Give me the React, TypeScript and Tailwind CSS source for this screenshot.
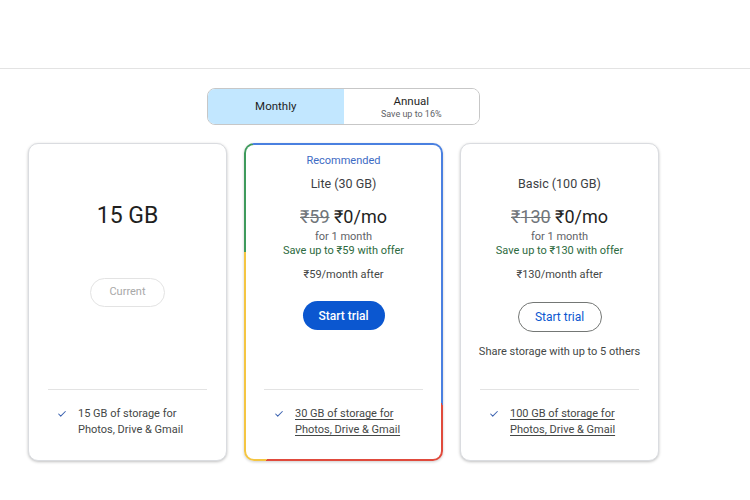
import { Check } from 'lucide-react';

type Plan = {
  title?: string;
  was: string;
  save: string;
  after: string;
  feature: string;
};

function Feature({ text, link }: { text: string; link?: boolean }) {
  return (
    <div className="flex gap-[11px] pl-[28px] pr-4 pt-[16px]">
      <Check className="mt-[3px] h-[10px] w-[10px] shrink-0 text-[#3b62b0]" strokeWidth={2.5} />
      <span className={`w-[114px] text-[11px] leading-4 text-[#444746] ${link ? 'underline underline-offset-2' : ''}`}>
        {text}
      </span>
    </div>
  );
}

function PriceBlock({ plan, recommended }: { plan: Plan; recommended?: boolean }) {
  return (
    <div className="flex flex-col items-center pt-[8px]">
      <div className={`text-[11px] leading-4 ${recommended ? 'text-[#3d6bc4]' : 'text-transparent'}`}>Recommended</div>
      <div className="mt-[6px] text-[12.5px] leading-[18px] text-[#3c4043]">{plan.title}</div>
      <div className="mt-[12px] text-[18px] leading-6 text-[#1f1f1f]">
        <span className="text-[#70757a] line-through decoration-1">₹{plan.was}</span> ₹0/mo
      </div>
      <div className="mt-[1px] text-[11px] leading-[14px] text-[#5f6368]">for 1 month</div>
      <div className="text-[11px] leading-[14px] text-[#2d6a3e]">Save up to ₹{plan.was} with offer</div>
      <div className="mt-[10px] text-[11px] leading-[14px] text-[#444746]">₹{plan.was}/month after</div>
    </div>
  );
}

export default function App() {
  const lite: Plan = { title: 'Lite (30 GB)', was: '59', save: '59', after: '59', feature: '30 GB of storage for Photos, Drive & Gmail' };
  const basic: Plan = { title: 'Basic (100 GB)', was: '130', save: '130', after: '130', feature: '100 GB of storage for Photos, Drive & Gmail' };

  return (
    <div className="min-h-[500px] w-[750px] bg-white font-['Roboto','Noto_Sans',sans-serif] text-[#1f1f1f]">
      <div className="h-[69px] border-b border-[#e3e3e3]" />

      <div className="ml-[28px] w-[631px]">
        <div className="mt-[19px] flex justify-center">
          <div className="flex h-[37px] w-[273px] overflow-hidden rounded-[8px] border border-[#c7c7c7]">
            <div className="flex flex-1 items-center justify-center bg-[#c2e7ff] text-[11.5px] text-[#1f1f1f]">Monthly</div>
            <div className="flex flex-1 flex-col items-center justify-center bg-white">
              <span className="text-[11.5px] leading-[14px] text-[#1f1f1f]">Annual</span>
              <span className="text-[9px] leading-[12px] text-[#5f6368]">Save up to 16%</span>
            </div>
          </div>
        </div>

        <div className="mt-[18px] flex gap-[17px]">
          {/* free plan */}
          <div className="flex h-[318px] w-[199px] flex-col rounded-[10px] border border-[#dadce0] bg-white shadow-[0_1px_3px_rgba(0,0,0,0.25)]">
            <div className="flex h-[245px] flex-col items-center pt-[56px]">
              <div className="text-[23px] leading-8 text-[#1f1f1f]">15 GB</div>
              <div className="mt-[46px] flex h-[29px] w-[75px] items-center justify-center rounded-full border border-[#e3e3e3] text-[11px] text-[#a8a8a8]">
                Current
              </div>
            </div>
            <div className="mx-[19px] h-px bg-[#e3e3e3]" />
            <Feature text="15 GB of storage for Photos, Drive & Gmail" />
          </div>

          {/* recommended plan */}
          <div className="h-[318px] w-[199px] rounded-[10px] bg-[conic-gradient(#4a80e0_0deg_136deg,#e04a3c_136deg_206deg,#f4c542_206deg_297deg,#3e9a5c_297deg_330deg,#4a80e0_330deg)] p-[2px] shadow-[0_1px_3px_rgba(0,0,0,0.2)]">
            <div className="flex h-full flex-col rounded-[8px] bg-white">
              <div className="flex h-[244px] flex-col items-center">
                <PriceBlock plan={lite} recommended />
                <button type="button" className="mt-[19px] h-[29px] w-[82px] rounded-full bg-[#0b57d0] text-[12px] font-medium text-white">
                  Start trial
                </button>
              </div>
              <div className="mx-[18px] h-px bg-[#e3e3e3]" />
              <Feature text={lite.feature} link />
            </div>
          </div>

          {/* basic plan */}
          <div className="flex h-[318px] w-[199px] flex-col rounded-[10px] border border-[#dadce0] bg-white shadow-[0_1px_3px_rgba(0,0,0,0.25)]">
            <div className="flex h-[245px] flex-col items-center pt-px">
              <PriceBlock plan={basic} />
              <button type="button" className="mt-[20px] h-[30px] w-[84px] rounded-full border border-[#747775] text-[12px] text-[#0b57d0]">
                Start trial
              </button>
              <div className="mt-[13px] text-[11px] leading-[14px] text-[#444746]">Share storage with up to 5 others</div>
            </div>
            <div className="mx-[19px] h-px bg-[#e3e3e3]" />
            <Feature text={basic.feature} link />
          </div>
        </div>
      </div>
    </div>
  );
}
